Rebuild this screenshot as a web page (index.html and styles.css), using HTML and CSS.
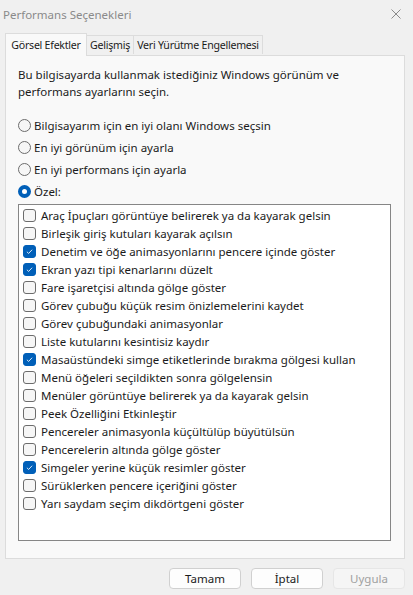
FILE: index.html
```html
<!DOCTYPE html>
<html lang="tr">
<head>
<meta charset="utf-8">
<title>Performans Seçenekleri</title>
<link rel="stylesheet" href="styles.css">
</head>
<body>
<div class="window">
  <div class="titlebar">
    <span class="title">Performans Seçenekleri</span>
    <svg class="close" width="10" height="10" viewBox="0 0 10 10"><path d="M0.5 0.5 L9.5 9.5 M9.5 0.5 L0.5 9.5" stroke="#8a8a8a" stroke-width="1" fill="none"/></svg>
  </div>
  <div class="tabs">
    <div class="tab active">Görsel Efektler</div>
    <div class="tab">Gelişmiş</div>
    <div class="tab">Veri Yürütme Engellemesi</div>
  </div>
  <div class="panel">
    <p class="desc">Bu bilgisayarda kullanmak istediğiniz Windows görünüm ve<br>performans ayarlarını seçin.</p>
    <div class="radios">
      <div class="radio"><span class="rb"></span>Bilgisayarım için en iyi olanı Windows seçsin</div>
      <div class="radio"><span class="rb"></span>En iyi görünüm için ayarla</div>
      <div class="radio"><span class="rb"></span>En iyi performans için ayarla</div>
      <div class="radio"><span class="rb on"></span>Özel:</div>
    </div>
    <div class="list">
      <div class="item"><span class="cb"></span>Araç İpuçları görüntüye belirerek ya da kayarak gelsin</div>
      <div class="item"><span class="cb"></span>Birleşik giriş kutuları kayarak açılsın</div>
      <div class="item"><span class="cb on"><svg viewBox="0 0 13 13"><path d="M3.4 6.8 L5.5 8.8 L9.6 4.4" stroke="#fff" stroke-width="1" fill="none"/></svg></span>Denetim ve öğe animasyonlarını pencere içinde göster</div>
      <div class="item"><span class="cb on"><svg viewBox="0 0 13 13"><path d="M3.4 6.8 L5.5 8.8 L9.6 4.4" stroke="#fff" stroke-width="1" fill="none"/></svg></span>Ekran yazı tipi kenarlarını düzelt</div>
      <div class="item"><span class="cb"></span>Fare işaretçisi altında gölge göster</div>
      <div class="item"><span class="cb"></span>Görev çubuğu küçük resim önizlemelerini kaydet</div>
      <div class="item"><span class="cb"></span>Görev çubuğundaki animasyonlar</div>
      <div class="item"><span class="cb"></span>Liste kutularını kesintisiz kaydır</div>
      <div class="item"><span class="cb on"><svg viewBox="0 0 13 13"><path d="M3.4 6.8 L5.5 8.8 L9.6 4.4" stroke="#fff" stroke-width="1" fill="none"/></svg></span>Masaüstündeki simge etiketlerinde bırakma gölgesi kullan</div>
      <div class="item"><span class="cb"></span>Menü öğeleri seçildikten sonra gölgelensin</div>
      <div class="item"><span class="cb"></span>Menüler görüntüye belirerek ya da kayarak gelsin</div>
      <div class="item"><span class="cb"></span>Peek Özelliğini Etkinleştir</div>
      <div class="item"><span class="cb"></span>Pencereler animasyonla küçültülüp büyütülsün</div>
      <div class="item"><span class="cb"></span>Pencerelerin altında gölge göster</div>
      <div class="item"><span class="cb on"><svg viewBox="0 0 13 13"><path d="M3.4 6.8 L5.5 8.8 L9.6 4.4" stroke="#fff" stroke-width="1" fill="none"/></svg></span>Simgeler yerine küçük resimler göster</div>
      <div class="item"><span class="cb"></span>Sürüklerken pencere içeriğini göster</div>
      <div class="item"><span class="cb"></span>Yarı saydam seçim dikdörtgeni göster</div>
    </div>
  </div>
  <div class="buttons">
    <button class="btn">Tamam</button>
    <button class="btn">İptal</button>
    <button class="btn disabled">Uygula</button>
  </div>
</div>
</body>
</html>
```

FILE: styles.css
```css
* { box-sizing: border-box; }
html, body { margin: 0; padding: 0; }
body {
  background: #f0f0f0;
  font-family: "Noto Sans", "Open Sans", sans-serif;
  font-size: 11.5px;
  color: #1b1b1b;
  width: 413px;
  height: 595px;
  overflow: hidden;
}
.window { width: 413px; height: 595px; }
.titlebar {
  height: 30px;
  display: flex;
  align-items: center;
  justify-content: space-between;
  padding: 0 12px 2px 3px;
}
.title { color: #8a8a8a; font-size: 11.5px; }
.close { display: block; }
.tabs {
  display: flex;
  align-items: flex-end;
  height: 25px;
  margin-left: 5px;
  position: relative;
  z-index: 1;
}
.tab {
  height: 19px;
  line-height: 18px;
  border: 1px solid #dcdcdc;
  border-bottom: none;
  border-left: none;
  background: #f0f0f0;
  margin-bottom: 1px;
  white-space: nowrap;
  text-align: center;
  font-size: 10.6px;
  letter-spacing: -0.25px;
}
.tab.active {
  height: 23px;
  line-height: 22px;
  background: #f9f9f9;
  border-left: 1px solid #dcdcdc;
  margin-bottom: -1px;
  width: 82px;
}
.tab:nth-child(2) { width: 47px; }
.tab:nth-child(3) { width: 129px; }
.panel {
  margin: 0 8px 0 5px;
  height: 504px;
  background: #f9f9f9;
  border: 1px solid #dcdcdc;
  padding: 10px 0 0 12px;
}
.desc {
  margin: 0;
  line-height: 17px;
  white-space: nowrap;
}
.radios { margin-top: 14px; }
.radio {
  height: 22px;
  display: flex;
  align-items: center;
}
.rb {
  width: 13px;
  height: 13px;
  border-radius: 50%;
  border: 1px solid #6c6c6c;
  background: #f6f6f6;
  margin-right: 3px;
  flex: none;
}
.rb.on {
  border: 4px solid #005fb8;
  background: #fff;
}
.list {
  margin-top: 2px;
  width: 373px;
  height: 337px;
  background: #fff;
  border: 1px solid #868686;
  padding: 1px 0 0 4px;
}
.item {
  height: 18px;
  display: flex;
  align-items: center;
  white-space: nowrap;
}
.cb {
  width: 13px;
  height: 13px;
  border: 1px solid #6c6c6c;
  border-radius: 3px;
  background: #f6f6f6;
  margin-right: 5px;
  flex: none;
  display: flex;
}
.cb.on { background: #005fb8; border-color: #005fb8; }
.cb svg { width: 11px; height: 11px; }
.buttons {
  display: flex;
  justify-content: flex-end;
  gap: 10px;
  margin: 9px 8px 0 0;
}
.btn {
  width: 72px;
  height: 21px;
  font-family: inherit;
  font-size: 11.5px;
  color: #1b1b1b;
  background: #fdfdfd;
  border: 1px solid #d0d0d0;
  border-radius: 4px;
  padding: 0;
}
.btn.disabled {
  color: #a0a0a0;
  background: #f5f5f5;
  border-color: #e6e6e6;
}
```
